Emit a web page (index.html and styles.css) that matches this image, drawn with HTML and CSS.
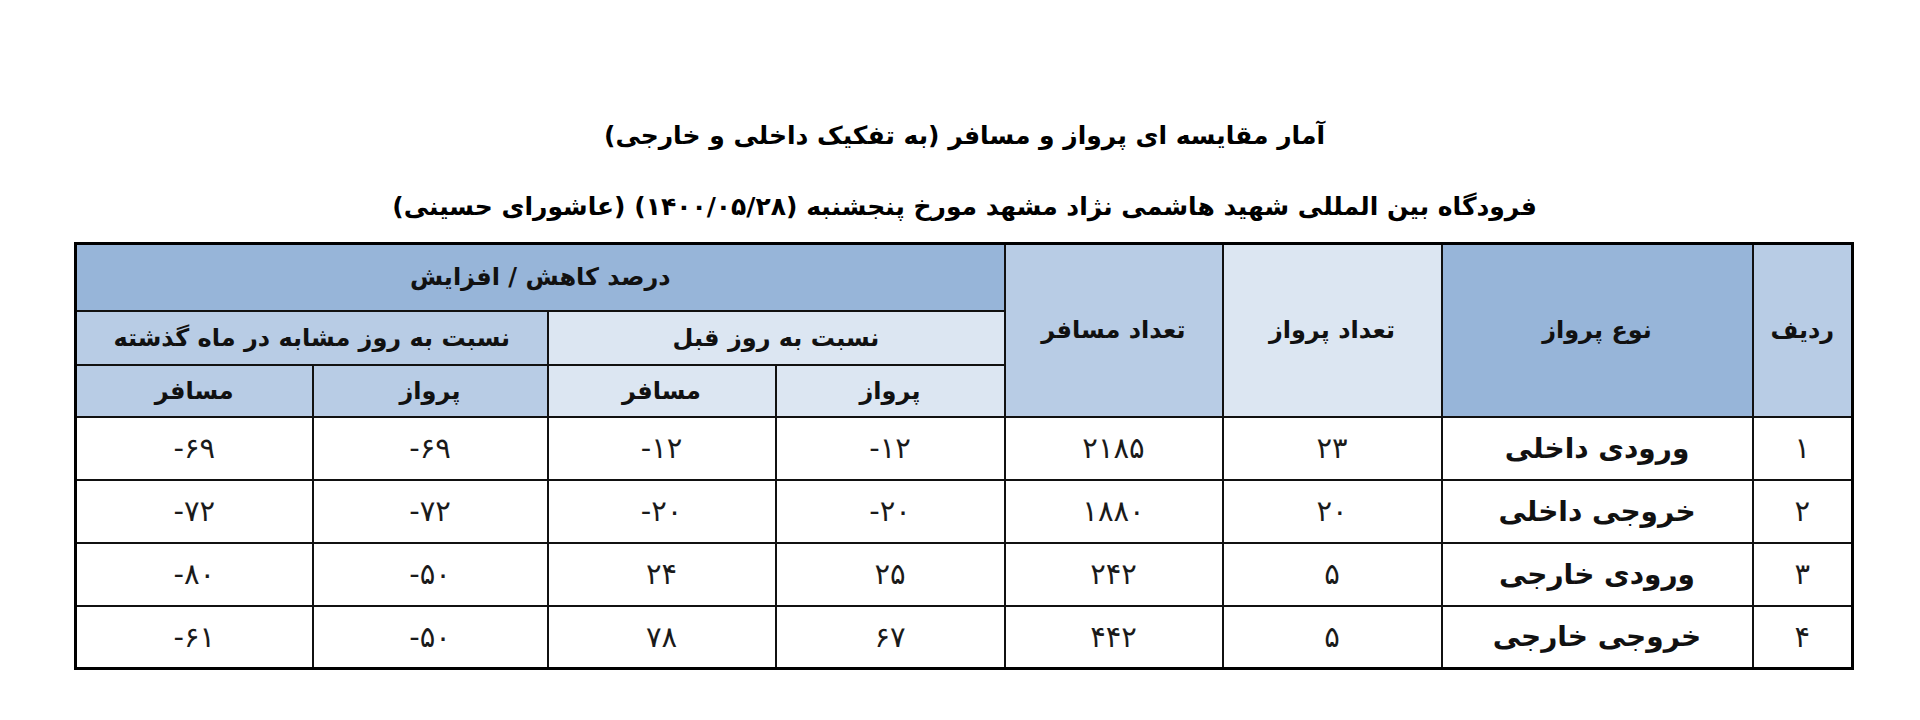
FILE: index.html
```html
<!DOCTYPE html>
<html lang="fa" dir="rtl">
<head>
<meta charset="utf-8">
<title>آمار مقایسه ای پرواز و مسافر</title>
<link rel="stylesheet" href="styles.css">
</head>
<body>
<main class="page">
  <header class="titles">
    <div class="title-line">آمار مقایسه ای پرواز و مسافر (به تفکیک داخلی و خارجی)</div>
    <div class="title-line">فرودگاه بین المللی شهید هاشمی نژاد مشهد مورخ پنجشنبه (۱۴۰۰/۰۵/۲۸) (عاشورای حسینی)</div>
  </header>
  <table class="stats">
    <colgroup>
      <col class="c-idx">
      <col class="c-type">
      <col class="c-flights">
      <col class="c-pax">
      <col class="c-d1">
      <col class="c-d2">
      <col class="c-m1">
      <col class="c-m2">
    </colgroup>
    <thead>
      <tr class="h1">
        <th rowspan="3" class="mid">ردیف</th>
        <th rowspan="3" class="dark">نوع پرواز</th>
        <th rowspan="3" class="light">تعداد پرواز</th>
        <th rowspan="3" class="mid">تعداد مسافر</th>
        <th colspan="4" class="dark">درصد کاهش / افزایش</th>
      </tr>
      <tr class="h2">
        <th colspan="2" class="light">نسبت به روز قبل</th>
        <th colspan="2" class="mid">نسبت به روز مشابه در ماه گذشته</th>
      </tr>
      <tr class="h3">
        <th class="light">پرواز</th>
        <th class="light">مسافر</th>
        <th class="mid">پرواز</th>
        <th class="mid">مسافر</th>
      </tr>
    </thead>
    <tbody>
      <tr>
        <td class="num">۱</td>
        <td class="label">ورودی داخلی</td>
        <td class="num">۲۳</td>
        <td class="num">۲۱۸۵</td>
        <td class="num">-۱۲</td>
        <td class="num">-۱۲</td>
        <td class="num">-۶۹</td>
        <td class="num">-۶۹</td>
      </tr>
      <tr>
        <td class="num">۲</td>
        <td class="label">خروجی داخلی</td>
        <td class="num">۲۰</td>
        <td class="num">۱۸۸۰</td>
        <td class="num">-۲۰</td>
        <td class="num">-۲۰</td>
        <td class="num">-۷۲</td>
        <td class="num">-۷۲</td>
      </tr>
      <tr>
        <td class="num">۳</td>
        <td class="label">ورودی خارجی</td>
        <td class="num">۵</td>
        <td class="num">۲۴۲</td>
        <td class="num">۲۵</td>
        <td class="num">۲۴</td>
        <td class="num">-۵۰</td>
        <td class="num">-۸۰</td>
      </tr>
      <tr>
        <td class="num">۴</td>
        <td class="label">خروجی خارجی</td>
        <td class="num">۵</td>
        <td class="num">۴۴۲</td>
        <td class="num">۶۷</td>
        <td class="num">۷۸</td>
        <td class="num">-۵۰</td>
        <td class="num">-۶۱</td>
      </tr>
    </tbody>
  </table>
</main>
</body>
</html>
```
FILE: styles.css
```css
html, body {
  margin: 0;
  padding: 0;
  background: #ffffff;
}

body {
  font-family: "DejaVu Sans", "Noto Sans", sans-serif;
  color: #000;
}

.page {
  width: 1779px;
  margin-right: 66px;
  margin-left: auto;
  padding-top: 100px;
}

.titles {
  text-align: center;
}

.title-line {
  font-weight: bold;
  font-size: 25px;
  line-height: 71px;
  height: 71px;
  white-space: nowrap;
}

.stats {
  width: 1779px;
  table-layout: fixed;
  border-collapse: collapse;
  border: 3px solid #000;
}

.c-idx { width: 100px; }
.c-type { width: 311px; }
.c-flights { width: 219px; }
.c-pax { width: 218px; }
.c-d1 { width: 229px; }
.c-d2 { width: 228px; }
.c-m1 { width: 235px; }
.c-m2 { width: 237px; }

.stats th,
.stats td {
  border: 2px solid #111;
  text-align: center;
  vertical-align: middle;
  padding: 0;
}

.stats th {
  font-weight: bold;
  font-size: 24px;
  color: #111;
}

.h1 { height: 67px; }
.h2 { height: 54px; }
.h3 { height: 52px; }

.stats tbody tr { height: 63px; }

.dark { background: #97b5d9; }
.mid { background: #b8cce5; }
.light { background: #dce6f2; }

.stats td {
  background: #fff;
  color: #1a1a1a;
  font-size: 29px;
}

.stats td.num {
  direction: ltr;
}

.stats td.label {
  font-weight: bold;
  font-size: 28px;
  color: #111;
}
```
